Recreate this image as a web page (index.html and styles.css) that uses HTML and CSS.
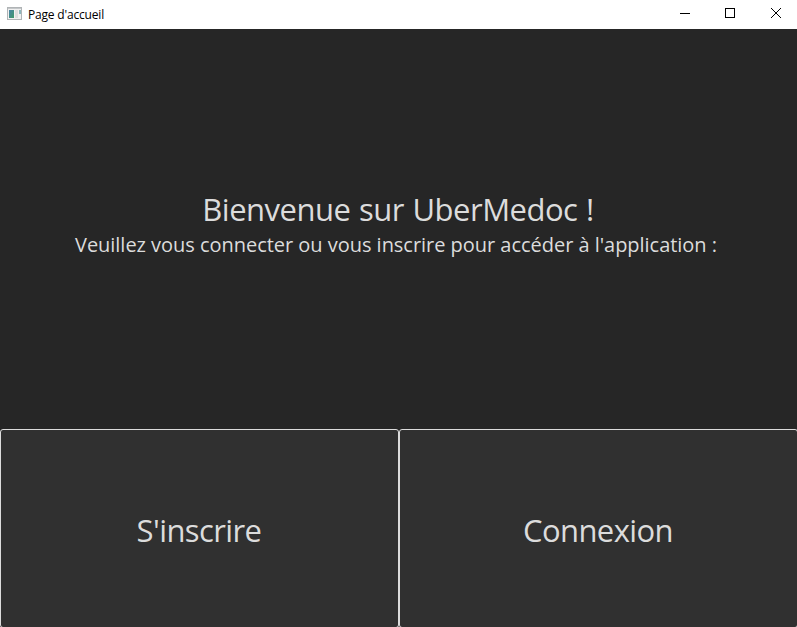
FILE: index.html
```html
<!DOCTYPE html>
<html lang="fr">
<head>
<meta charset="utf-8">
<title>Page d'accueil</title>
<link rel="stylesheet" href="styles.css">
</head>
<body>
<header class="titlebar">
<svg class="app-icon" width="16" height="16" viewBox="0 0 16 16"><defs><linearGradient id="pane" x2="1" y2="1"><stop offset="0" stop-color="#4a83a8"/><stop offset="1" stop-color="#3f9a68"/></linearGradient></defs><rect x=".5" y="1.5" width="14" height="12" fill="#f1f1f1" stroke="#b0b4b6"/><path d="M1 2.5h13" stroke="#c4c7c9"/><rect x="2" y="4" width="5" height="8" fill="url(#pane)"/><rect x="8" y="4" width="3" height="8" fill="#dedede"/><rect x="12" y="4" width="2" height="4" fill="#8db8bd"/></svg>
<span class="title">Page d'accueil</span>
<div class="controls">
<svg width="46" height="28" viewBox="0 0 46 28"><path d="M19 13.5h10" stroke="#000"/></svg>
<svg width="46" height="28" viewBox="0 0 46 28"><rect x="18.5" y="8.5" width="9" height="9" fill="none" stroke="#000"/></svg>
<svg width="46" height="28" viewBox="0 0 46 28"><path d="M18 8l10 10M28 8l-10 10" stroke="#000"/></svg>
</div>
</header>
<main class="welcome">
<h1>Bienvenue sur UberMedoc !</h1>
<p>Veuillez vous connecter ou vous inscrire pour accéder à l'application :</p>
</main>
<nav class="actions">
<button>S'inscrire</button>
<button>Connexion</button>
</nav>
</body>
</html>
```
FILE: styles.css
```css
* { box-sizing: border-box; }
html { overflow: hidden; }
body { margin: 0; height: 627px; display: flex; flex-direction: column; overflow: hidden; background: #262626; color: #dcdcdc; font-family: "Open Sans", "Noto Sans", sans-serif; }
.titlebar { flex: none; height: 29px; background: #fff; color: #000; display: flex; align-items: center; padding-left: 7px; font-size: 12px; }
.app-icon { margin-bottom: 2px; }
.title { margin-left: 5px; padding-bottom: 1px; letter-spacing: -0.18px; }
.controls { margin-left: auto; display: flex; height: 28px; align-self: flex-start; margin-right: -2px; }
.welcome { flex: none; height: 400px; display: flex; flex-direction: column; align-items: center; justify-content: center; padding-bottom: 12px; }
h1 { margin: 0; padding-right: 1px; font-weight: 400; font-size: 31px; line-height: 43px; letter-spacing: -0.5px; word-spacing: 1px; }
p { margin: 0; padding-right: 5px; font-size: 20px; line-height: 27px; letter-spacing: -0.03px; }
.actions { flex: none; height: 199px; width: 798px; display: grid; grid-template-columns: 1fr 1fr; }
button { font: inherit; font-size: 31px; letter-spacing: -0.6px; color: inherit; background: #303030; border: 1px solid #dcdcdc; border-radius: 3px; padding: 3px 1px 0 0; }
```
